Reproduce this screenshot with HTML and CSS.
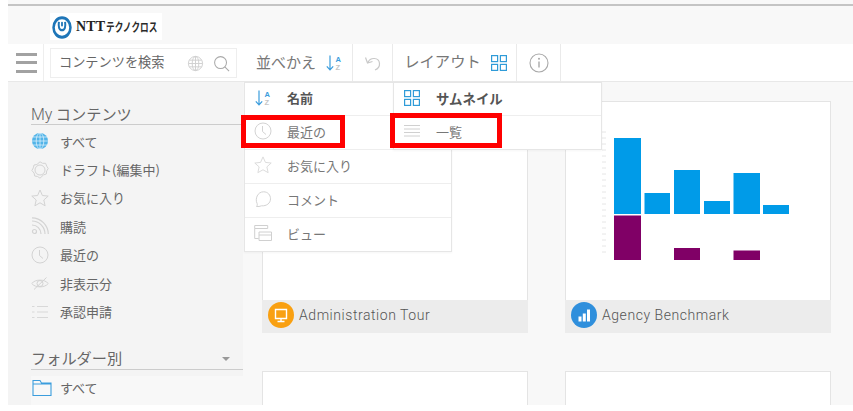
FILE: index.html
```html
<!DOCTYPE html>
<html lang="ja">
<head>
<meta charset="utf-8">
<title>コンテンツ</title>
<link rel="stylesheet" href="styles.css">
</head>
<body>
<div class="app">
  <header class="brand">
    <div class="logo">
      <svg class="logo-mark" viewBox="0 0 22 22" width="20" height="23" preserveAspectRatio="none"><circle cx="11" cy="11" r="9.300" fill="none" stroke="#1f76b8" stroke-width="2.800"/><path d="M7.600 5.600c-.8 4.600.2 8 3.400 8s4.200-3.400 3.400-8" fill="none" stroke="#1f76b8" stroke-width="2.200"/><rect x="10" y="5.500" width="2" height="4.500" rx="1" fill="#1f76b8"/></svg>
      <span class="logo-ntt">NTT</span><span class="logo-kana">テクノクロス</span>
    </div>
  </header>
  <nav class="toolbar">
    <button class="menu-btn" aria-label="menu"><span></span><span></span><span></span></button>
    <div class="search">
      <span class="search-text">コンテンツを検索</span>
      <svg class="ic" viewBox="0 0 18 18" width="17" height="17"><g fill="none" stroke="#cfcfcf"><circle cx="9" cy="9" r="7.500"/><ellipse cx="9" cy="9" rx="3.500" ry="7.500"/><path d="M9 1.500v15M1.500 9h15M2.500 5.500h13M2.500 12.500h13"/></g></svg>
      <svg class="ic" viewBox="0 0 18 18" width="17" height="17"><g fill="none" stroke="#a9a9a9" stroke-width="1.100"><circle cx="8" cy="8" r="6.300"/><path d="M12.500 12.500l4.500 4.500"/></g></svg>
    </div>
    <div class="tool tool-sort"><span class="tool-label">並べかえ</span>
      <svg class="ic" viewBox="0 0 18 18" width="18" height="18"><path d="M5 1.500v14M1.800 12.300L5 15.800l3.200-3.500" fill="none" stroke="#3b9ddd" stroke-width="1.200"/><text x="10.500" y="7.500" class="az az-a">A</text><text x="10.500" y="15.500" class="az az-z">Z</text></svg>
    </div>
    <div class="tool tool-undo">
      <svg viewBox="0 0 18 18" width="18" height="18"><path d="M4 8.500C6 3 15 3 15.500 9.500c.2 3-2 5.500-4.500 6.500M1.500 3.500L3.500 9l5-1.500" fill="none" stroke="#c9c9c9" stroke-width="1.200"/></svg>
    </div>
    <div class="tool tool-layout"><span class="tool-label">レイアウト</span>
      <svg class="ic" viewBox="0 0 16 16" width="16" height="16"><g fill="none" stroke="#2f9bd8" stroke-width="1.200"><rect x=".6" y=".6" width="6" height="6"/><rect x="9.400" y=".6" width="6" height="6"/><rect x=".6" y="9.400" width="6" height="6"/><rect x="9.400" y="9.400" width="6" height="6"/></g></svg>
    </div>
    <div class="tool tool-info">
      <svg viewBox="0 0 20 20" width="20" height="20"><circle cx="10" cy="10" r="9" fill="none" stroke="#a9a9a9" stroke-width="1.100"/><path d="M10 8.500v6" stroke="#a9a9a9" stroke-width="1.400"/><circle cx="10" cy="5.800" r="1" fill="#a9a9a9"/></svg>
    </div>
  </nav>
  <div class="body">
    <aside class="side">
      <h2 class="side-title my"><span class="my-en">My</span> コンテンツ</h2>
      <ul class="side-list">
        <li><svg viewBox="0 0 18 18" width="18" height="18"><circle cx="9" cy="9" r="8" fill="#52b4e8"/><g fill="none" stroke="#e6f5fd" stroke-width=".7"><ellipse cx="9" cy="9" rx="3.800" ry="8"/><path d="M9 1v16M1 9h16M2 5h14M2 13h14"/></g></svg>すべて</li>
        <li><svg viewBox="0 0 18 18" width="18" height="18"><g fill="none" stroke="#d3d3d3"><path d="M9 .8l2.600 1.500 3 0 1.100 2.800 1.500 2.400-1.500 2.500-.4 3-2.800.9L9 17.200l-2.400-1.700-2.900-.5-.6-2.900L.9 9.500l1.400-2.600.7-2.900 2.900-.5z"/><circle cx="9" cy="9" r="5"/></g></svg>ドラフト(編集中)</li>
        <li><svg viewBox="0 0 18 18" width="18" height="18"><path d="M9 1l2.400 5.500 5.800.6-4.400 3.900 1.300 5.800L9 13.800l-5.100 3 1.300-5.800L.8 7.100l5.800-.6z" fill="none" stroke="#d3d3d3"/></svg>お気に入り</li>
        <li><svg viewBox="0 0 18 18" width="18" height="18"><g fill="none" stroke="#d3d3d3" stroke-width="1.200"><circle cx="3.500" cy="14.500" r="2"/><path d="M1 8a9 9 0 0 1 9 9M1 4a13 13 0 0 1 13 13M1 .8A16.500 16.500 0 0 1 17.300 17"/></g></svg>購読</li>
        <li><svg viewBox="0 0 18 18" width="18" height="18"><g fill="none" stroke="#d3d3d3"><circle cx="9" cy="9" r="8"/><path d="M8.500 4v5.500l3.500 3"/></g></svg>最近の</li>
        <li><svg viewBox="0 0 18 18" width="18" height="18"><g fill="none" stroke="#d3d3d3"><path d="M.8 9.500C4 5 14 5 17.200 9.500 14 14 4 14 .8 9.500z"/><circle cx="9" cy="9.500" r="3"/><path d="M3 15.500L15.500 3.500"/></g></svg>非表示分</li>
        <li><svg viewBox="0 0 18 18" width="18" height="18"><path d="M6 3.500h11M6 9h11M6 14.500h11M1 3.500h2.500M1 9h2.500M1 14.500h2.500" fill="none" stroke="#d8d8d8"/></svg>承認申請</li>
      </ul>
      <h2 class="side-title folder">フォルダー別<span class="caret"></span></h2>
      <div class="folder-row"><svg viewBox="0 0 20 18" width="20" height="18"><path d="M1 16.500V1.500h7l1.500 2.500H19v12.500zM1 5h18" fill="none" stroke="#3b9ddd" stroke-width="1.100"/></svg>すべて</div>
    </aside>
    <main class="main">
      <article class="card">
        <div class="thumb"></div>
        <div class="card-foot"><span class="badge orange"><svg viewBox="0 0 16 16" width="16" height="16"><path d="M2.500 2.500h11v9h-11zM8 11.500V14M4.500 14.500h7" fill="none" stroke="#fff" stroke-width="1.400"/></svg></span>Administration Tour</div>
      </article>
      <article class="card">
        <div class="thumb">
          <svg class="chart" viewBox="0 0 195 130" width="195" height="130">
            <g class="ticks"><path d="M2 2h4M2 8h4M2 14h4M2 20h4M2 26h4M2 32h4M2 38h4M2 44h4M2 50h4M2 56h4M2 62h4M2 68h4M2 74h4M2 80h4M2 86h4M2 92h4M2 98h4M2 104h4M2 110h4M2 116h4M2 122h4"/></g>
            <g fill="#009be8"><rect x="14" y="8" width="27" height="76"/><rect x="44.500" y="63" width="25.500" height="21"/><rect x="74" y="40" width="26" height="44"/><rect x="104" y="71" width="26" height="13"/><rect x="133.500" y="43" width="26.500" height="41"/><rect x="163" y="75" width="26" height="9"/></g>
            <g fill="#800066"><rect x="14" y="85.500" width="27" height="44.500"/><rect x="74" y="118" width="26" height="12"/><rect x="133.500" y="120.500" width="26.500" height="9.500"/></g>
          </svg>
        </div>
        <div class="card-foot"><span class="badge blue"><svg viewBox="0 0 16 16" width="16" height="16"><path d="M2.500 9.500h3v5h-3zM6.800 6.500h3v8h-3zM11 2.500h3v12h-3z" fill="#fff"/></svg></span>Agency Benchmark</div>
      </article>
      <article class="card"><div class="thumb"></div></article>
      <article class="card"><div class="thumb"></div></article>
    </main>
  </div>

  <div class="dropdown dropdown-sort">
    <div class="dd-row strong"><svg viewBox="0 0 18 18" width="18" height="18"><path d="M5 1.500v14M1.800 12.300L5 15.800l3.200-3.500" fill="none" stroke="#3b9ddd" stroke-width="1.200"/><text x="10.500" y="7.500" class="az az-a">A</text><text x="10.500" y="15.500" class="az az-z">Z</text></svg>名前</div>
    <div class="dd-row"><svg viewBox="0 0 18 18" width="18" height="18"><g fill="none" stroke="#d3d3d3"><circle cx="9" cy="9" r="8"/><path d="M8.500 4v5.500l3.500 3"/></g></svg>最近の</div>
    <div class="dd-row"><svg viewBox="0 0 20 20" width="20" height="20"><path d="M10 1l2.700 6.100 6.400.7-4.800 4.300 1.400 6.400L10 15.300l-5.700 3.200 1.400-6.400L.9 7.800l6.400-.7z" fill="none" stroke="#d8d8d8"/></svg>お気に入り</div>
    <div class="dd-row"><svg viewBox="0 0 18 18" width="18" height="18"><path d="M2.500 16.500c.8-1 1-2 .6-3C.8 9 3.500 1.800 9.500 1.800c4.500 0 7 3.300 7 7 0 4.500-4 7.400-9 7-1.700.7-3.300.9-5 .7z" fill="none" stroke="#d3d3d3"/></svg>コメント</div>
    <div class="dd-row"><svg viewBox="0 0 18 18" width="18" height="18"><path d="M.7 1.500h13v3H.7zM.7 4.500v10h4M5 8h12.500v8.500H5zM5 11h12.500" fill="none" stroke="#d0d0d0"/></svg>ビュー</div>
  </div>
  <div class="dropdown dropdown-layout">
    <div class="dd-row strong"><svg viewBox="0 0 16 16" width="16" height="16"><g fill="none" stroke="#2f9bd8" stroke-width="1.200"><rect x=".6" y=".6" width="6" height="6"/><rect x="9.400" y=".6" width="6" height="6"/><rect x=".6" y="9.400" width="6" height="6"/><rect x="9.400" y="9.400" width="6" height="6"/></g></svg>サムネイル</div>
    <div class="dd-row"><svg viewBox="0 0 16 14" width="16" height="14"><path d="M0 1.500h16M0 5h16M0 8.500h16M0 12h16" stroke="#d0d0d0"/></svg>一覧</div>
  </div>
  <div class="mark mark-recent"></div>
  <div class="mark mark-list"></div>
</div>
</body>
</html>
```
FILE: styles.css
```css
* { box-sizing: border-box; }
html, body { margin: 0; padding: 0; background: #fff; }
body { width: 853px; height: 411px; overflow: hidden; font-family: "Noto Sans CJK JP", "Noto Sans", sans-serif; color: #666; }
svg { display: block; flex: none; }
.app { position: relative; margin-left: 8px; padding-top: 4px; height: 405px; overflow: hidden; background: #f8f8f8; }
.app::before { content: ""; display: block; height: 2px; background: #c4c4c4; }
.brand { height: 38px; padding: 7px 0 0 42px; background: #f8f8f8; }
.logo { display: flex; align-items: center; width: 112px; height: 27px; background: #fff; padding: 1px 0 0 2px; color: #333; white-space: nowrap; }
.logo-mark { margin-right: 4px; }
.logo-ntt { flex: none; font: 700 14px/1 "Liberation Serif", serif; letter-spacing: .2px; color: #222; }
.logo-kana { flex: none; display: inline-block; width: 72px; margin-left: 1px; font-weight: 700; font-size: 12px; line-height: 1; color: #2a2a2a; transform: scaleX(.72); transform-origin: left center; }
.toolbar { display: flex; height: 38px; background: #fff; border-bottom: 1px solid #e8e8e8; }
.menu-btn { width: 36px; padding: 0 0 0 8px; border: 0; border-right: 1px solid #eee; background: #fff; display: flex; flex-direction: column; justify-content: center; gap: 5.500px; }
.menu-btn span { display: block; width: 21px; height: 3px; background: #a2a2a2; }
.search { display: flex; align-items: center; width: 187px; height: 30px; margin: 4px 6px 0 6px; padding: 0 6px 0 8px; border: 1px solid #eee; }
.search-text { flex: 1; font-size: 13.200px; line-height: 1; padding-bottom: 3px; color: #666; }
.search .ic + .ic { margin-left: 9px; }
.tool { display: flex; align-items: center; justify-content: center; height: 100%; border-right: 1px solid #eaeaea; font-size: 15px; color: #777; gap: 9px; }
.tool-label { line-height: 1; padding-bottom: 3px; }
.tool-sort { width: 110px; padding-left: 4px; }
.tool-undo { width: 40px; }
.tool-layout { width: 124px; padding-left: 2px; gap: 10px; }
.tool-layout .tool-label { font-size: 15.300px; }
.tool-info { width: 44px; }
.az { font: 700 7.500px "Liberation Sans", sans-serif; }
.az-a { fill: #3b9ddd; }
.az-z { fill: #c5c5c5; }
.body { display: flex; height: 323px; }
.side { width: 235px; flex: none; padding: 19px 0 0 23px; background: #f4f4f4; }
.side-title { margin: 0; font-weight: 400; color: #666; font-size: 15.200px; line-height: 24px; height: 24px; border-bottom: 1px solid #ccc; position: relative; }
.my-en { font-family: Roboto, sans-serif; font-weight: 300; font-size: 16px; }
.side-list { list-style: none; margin: 2px 0 0; padding: 0; }
.side-list li { display: flex; align-items: center; gap: 11px; height: 28.400px; font-size: 13px; color: #666; white-space: nowrap; }
.side-title.folder { margin-top: 19px; height: 25px; }
.caret { position: absolute; right: 13px; top: 12px; border: 4px solid transparent; border-top-color: #999; border-bottom-width: 0; }
.folder-row { display: flex; align-items: center; gap: 8px; height: 29px; margin-top: 6px; padding: 0 0 5px 1px; font-size: 13px; color: #666; background: #f8f8f8; }
.main { flex: 1; display: grid; grid-template-columns: 266px 266px; column-gap: 37px; row-gap: 38px; align-content: start; padding: 19px 0 0 19px; }
.card { height: 232px; display: flex; flex-direction: column; border: 1px solid #e4e4e4; border-bottom: 0; background: #fff; }
.thumb { flex: 1; padding: 28px 0 0 34px; }
.ticks path { fill: none; stroke: #e6e6e6; }
.card-foot { display: flex; align-items: center; gap: 5px; height: 33px; margin: 0 -1px; padding: 0 0 3px 6px; background: #ececec; font: 300 14px Roboto, sans-serif; letter-spacing: .55px; color: #555; }
.badge { display: flex; align-items: center; justify-content: center; width: 26px; height: 26px; border-radius: 50%; }
.orange { background: #f9a011; }
.blue { background: #2f8fdc; }
.dropdown { position: absolute; top: 82px; background: #fff; border: 1px solid #e6e6e6; box-shadow: 0 1px 2px rgba(0,0,0,.04); }
.dropdown-sort { left: 236px; width: 208px; }
.dropdown-layout { left: 385px; width: 209px; }
.dd-row { display: flex; align-items: center; height: 34px; padding: 0 0 3px 9px; border-top: 1px solid #eee; font-size: 13px; color: #777; }
.dd-row:first-child { border-top: 0; height: 32px; }
.dd-row svg { margin-right: 15px; width: 18px; }
.dd-row.strong { font-weight: 700; color: #555; }
.dropdown-layout .dd-row svg { margin-right: 15px; }
.dropdown-layout .dd-row.strong { font-size: 13.400px; }
.mark { position: absolute; border: 5px solid #f00; }
.mark-recent { left: 233px; top: 115px; width: 104px; height: 33px; }
.mark-list { left: 382px; top: 113px; width: 112px; height: 35px; }
```
